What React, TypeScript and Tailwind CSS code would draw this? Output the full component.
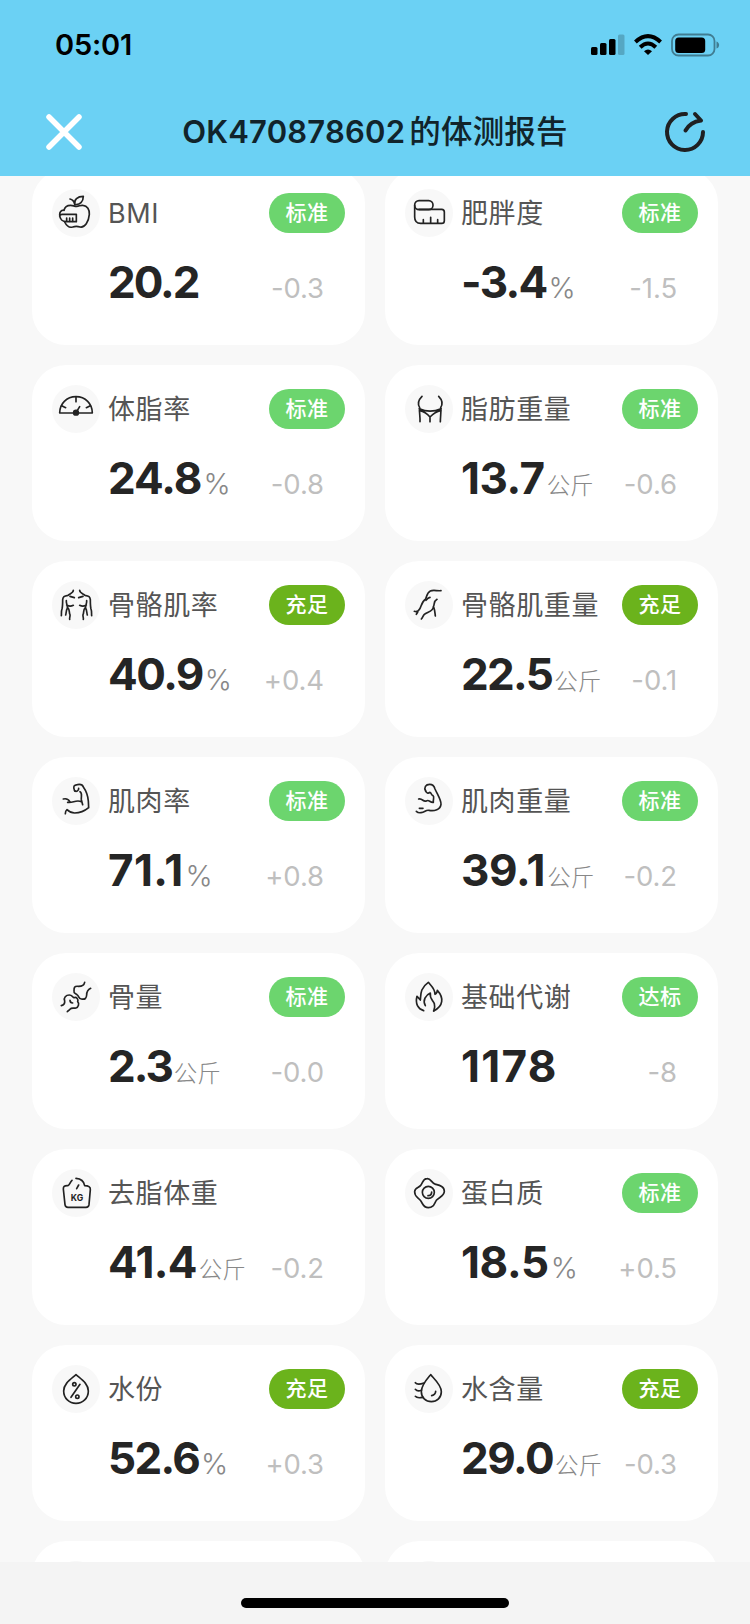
import React from 'react';

const iconPaths: Record<string, React.ReactNode> = {
  apple: (
    <>
      <path d="M54 30C60 31 66 37 68 46C66 32 76 22 94 22C94 38 84 49 68 46" />
      <path d="M36 64C38 54 46 49 56 49C64 49 66 52 74 52C82 52 84 48 93 49C106 50 113 62 112 76C110 98 99 117 84 114C76 111 70 111 62 114C52 117 43 109 38 99" />
      <path d="M35 63C27 64 23 69 23 77C23 90 32 98 44 98H73V76H31C26 76 23 79 23 82" />
      <path d="M44 87v10M53 87v10M62 87v10" />
    </>
  ),
  tape: (
    <>
      <rect x="29" y="35" width="55" height="27" rx="13" />
      <path d="M29 50V84C29 97 35 103 47 103H110Q118 103 118 95V69Q118 61 110 61H42" />
      <path d="M55 92v10M77 85v17M98 92v10" />
    </>
  ),
  gauge: (
    <>
      <path d="M23 84C23 56 44 35 72 35S121 56 121 84Z" />
      <path d="M72 36v14M29 62l12 6M115 62l-12 6M72 83l11-18" />
      <circle cx="72" cy="83" r="7" fill="currentColor" />
    </>
  ),
  waist: (
    <>
      <path d="M51 34C39 46 38 58 44 68C42 80 46 96 45 110" />
      <path d="M101 34C113 46 113 58 107 68C109 80 106 96 106 110" />
      <path d="M43 71Q75 86 108 71M44 77C58 80 67 87 75 96C84 87 93 80 107 77M75 96v14" />
    </>
  ),
  torso: (
    <>
      <path d="M64 28C64 36 54 38 48 43C36 45 33 47 32 56C32 68 32 76 30 84C27 92 29 98 28 104" />
      <path d="M43 59C42 68 47 72 46 82C42 88 43 96 41 102M47 80C55 88 50 94 54 101C55 107 52 110 53 115M44 72C50 76 58 76 64 73M54 46L67 50" />
      <g transform="translate(147) scale(-1 1)">
        <path d="M64 28C64 36 54 38 48 43C36 45 33 47 32 56C32 68 32 76 30 84C27 92 29 98 28 104" />
        <path d="M43 59C42 68 47 72 46 82C42 88 43 96 41 102M47 80C55 88 50 94 54 101C55 107 52 110 53 115M44 72C50 76 58 76 64 73M54 46L67 50" />
      </g>
    </>
  ),
  limb: (
    <>
      <path d="M108 29C96 30 84 26 76 30C66 35 66 44 62 54C50 62 49 76 44 84C40 91 36 94 28 91M34 100L38 94" />
      <path d="M75 49C70 50 66 54 63 58M49 114C53 110 54 105 57 101C68 92 86 92 85 77C90 70 84 62 96 55M86 78C90 88 90 96 91 105" />
    </>
  ),
  biceps: (
    <>
      <path d="M68 42C62 28 66 24 76 23C86 21 92 24 94 30C104 44 108 60 109 72L110 92C98 102 80 108 68 108C58 108 50 103 45 98C41 101 40 106 40 110" />
      <path d="M68 41C72 45 81 42 80 34M84 44C92 48 87 58 88 68L92 83M34 66C42 64 50 67 54 75M47 76C62 79 72 67 88 74" />
    </>
  ),
  muscle: (
    <>
      <path d="M62 42C56 32 62 22 74 22C84 22 88 28 90 36C98 54 109 70 108 82C106 98 88 103 72 100C62 98 60 106 48 107C42 108 38 107 34 103" />
      <path d="M62 42C64 48 70 50 74 46C80 46 77 54 84 56C89 60 84 66 85 76C74 77 72 66 64 72C54 76 54 64 41 66M43 94h11" />
    </>
  ),
  bone: (
    <>
      <path d="M98 28C96 38 90 40 80 40C66 38 66 44 66 54C64 62 72 61 76 66C80 68 80 77 88 78C100 80 103 76 104 66C104 54 108 50 116 46" />
      <path d="M28 98C36 96 39 92 38 84C34 74 42 66 52 66C61 66 59 71 66 74C74 71 80 79 77 86C83 92 79 103 72 105C64 107 59 103 54 109C51 113 48 112 46 116M54 82C54 87 58 90 62 90" />
    </>
  ),
  flame: (
    <>
      <path d="M56 113C39 108 30 92 36 70C40 74 43 77 46 81C48 66 44 46 70 28C76 36 90 46 90 64C94 62 97 58 97 52C108 64 112 74 110 86C108 100 98 108 86 114" />
      <path d="M61 98C52 82 62 66 76 60C73 76 84 82 88 92C91 102 88 108 86 114" />
    </>
  ),
  scale: (
    <>
      <path d="M60 34C54 39 54 46 48 50C36 49 34 54 34 60L39 107Q40 115 48 115H102Q110 115 111 107L115 62C116 54 109 50 98 50C96 38 87 29 72 28M74 59L80 48" />
      <text x="75" y="95" textAnchor="middle" fontSize="26" fontWeight="700" fill="currentColor" stroke="none" fontFamily="Inter, sans-serif">
        KG
      </text>
    </>
  ),
  egg: (
    <>
      <path d="M66 29C79 28 78 42 92 46C104 49 118 52 118 67C118 82 102 84 94 94C87 105 86 116 70 116C54 116 54 104 46 94C38 84 28 82 29 68C29 56 42 57 48 48C54 40 54 29 66 29Z" />
      <circle cx="70" cy="70" r="18" />
      <path d="M69 80C76 80 80 76 80 69" />
    </>
  ),
  percentDrop: (
    <>
      <path d="M72 29C56 43 35 56 35 78C35 100 52 115 72 115S109 100 109 78C109 56 88 43 72 29Z" />
      <circle cx="67" cy="58" r="5" />
      <circle cx="76" cy="95" r="5" />
      <path d="M84 58L57 97" />
    </>
  ),
  drop: (
    <>
      <path d="M77 29C66 42 49 60 49 80C49 98 62 110 79 110S109 98 109 80C109 60 90 44 77 29Z" />
      <path d="M80 92C88 90 92 85 92 79M31 53C36 60 46 58 57 54M31 73C36 79 42 79 49 76M31 94C36 100 44 99 53 97" />
    </>
  ),
};

type Metric = {
  icon?: string;
  name?: string;
  status?: string;
  value?: string;
  tracking?: string;
  unit?: string;
  diff?: string;
};

const metrics: Metric[] = [
  { icon: 'apple', name: 'BMI', status: '标准', value: '20.2', tracking: 'tracking-[-2px]', diff: '-0.3' },
  { icon: 'tape', name: '肥胖度', status: '标准', value: '-3.4', tracking: 'tracking-[-1.7px]', unit: '%', diff: '-1.5' },
  { icon: 'gauge', name: '体脂率', status: '标准', value: '24.8', tracking: 'tracking-[-1px]', unit: '%', diff: '-0.8' },
  { icon: 'waist', name: '脂肪重量', status: '标准', value: '13.7', tracking: 'tracking-[-0.5px]', unit: '公斤', diff: '-0.6' },
  { icon: 'torso', name: '骨骼肌率', status: '充足', value: '40.9', tracking: 'tracking-[-1.5px]', unit: '%', diff: '+0.4' },
  { icon: 'limb', name: '骨骼肌重量', status: '充足', value: '22.5', tracking: 'tracking-[-1.7px]', unit: '公斤', diff: '-0.1' },
  { icon: 'biceps', name: '肌肉率', status: '标准', value: '71.1', tracking: 'tracking-[0.3px]', unit: '%', diff: '+0.8' },
  { icon: 'muscle', name: '肌肉重量', status: '标准', value: '39.1', tracking: 'tracking-[-0.3px]', unit: '公斤', diff: '-0.2' },
  { icon: 'bone', name: '骨量', status: '标准', value: '2.3', tracking: 'tracking-[-2px]', unit: '公斤', diff: '-0.0' },
  { icon: 'flame', name: '基础代谢', status: '达标', value: '1178', tracking: 'tracking-[1.3px]', diff: '-8' },
  { icon: 'scale', name: '去脂体重', value: '41.4', tracking: 'tracking-[-0.7px]', unit: '公斤', diff: '-0.2' },
  { icon: 'egg', name: '蛋白质', status: '标准', value: '18.5', tracking: 'tracking-[-0.4px]', unit: '%', diff: '+0.5' },
  { icon: 'percentDrop', name: '水份', status: '充足', value: '52.6', tracking: 'tracking-[-1.7px]', unit: '%', diff: '+0.3' },
  { icon: 'drop', name: '水含量', status: '充足', value: '29.0', tracking: 'tracking-[-1.5px]', unit: '公斤', diff: '-0.3' },
  {},
  {},
];

const statusColor: Record<string, string> = {
  标准: 'bg-[#6cd56e]',
  达标: 'bg-[#6cd56e]',
  充足: 'bg-[#6bb31c]',
};

const MetricCard: React.FC<{ metric: Metric }> = ({ metric }) => (
  <div className="h-[176px] rounded-[34px] bg-white p-5">
    <div className="flex h-12 items-center">
      <div className="h-12 w-12 shrink-0 rounded-full bg-[#f8f8f8] text-[#222]">
        {metric.icon && (
          <svg viewBox="0 0 144 144" className="h-12 w-12" fill="none" stroke="currentColor" strokeWidth="5" strokeLinecap="round" strokeLinejoin="round">
            {iconPaths[metric.icon]}
          </svg>
        )}
      </div>
      <span className="ml-2 flex-1 whitespace-nowrap pt-[3px] text-[27px] tracking-[0.6px] text-[#555]">{metric.name}</span>
      {metric.status && (
        <span className={`flex h-10 w-[76px] items-center justify-center rounded-full text-[21px] font-medium tracking-[0.5px] text-white ${statusColor[metric.status]}`}>
          {metric.status}
        </span>
      )}
    </div>
    <div className="mt-[15px] flex items-baseline pl-14 pr-[21px] leading-[60px]">
      <span className={`text-[44px] font-bold text-[#252525] ${metric.tracking ?? ''}`}>{metric.value}</span>
      {metric.unit === '%' && <span className="ml-[2px] text-[29px] font-light text-[#888]">%</span>}
      {metric.unit === '公斤' && <span className="ml-[2px] text-[23.5px] font-light text-[#888]">公斤</span>}
      <span className="ml-auto text-[27.5px] font-normal tracking-[-0.1px] text-[#bfbfbf]">{metric.diff}</span>
    </div>
  </div>
);

const StatusBar: React.FC = () => (
  <div className="flex h-[88px] items-center justify-between pl-[55px] pr-[30px] pt-[2px]">
    <span className="text-[29px] font-semibold tracking-[-0.2px] text-black">05:01</span>
    <div className="flex items-center text-black">
      <svg width="34" height="22" viewBox="0 0 34 22" fill="currentColor">
        <rect x="0" y="13" width="6.5" height="8" rx="1.5" />
        <rect x="9" y="9" width="6.5" height="12" rx="1.5" />
        <rect x="18" y="5" width="6.5" height="16" rx="1.5" />
        <rect x="27" y="0.5" width="6.5" height="20.5" rx="1.5" opacity="0.2" />
      </svg>
      <svg width="28" height="22" viewBox="0 0 28 22" fill="none" stroke="currentColor" strokeWidth="4" className="ml-[9px]">
        <path d="M1.4 8Q14 -3.6 26.6 8" />
        <path d="M6.2 13.2Q14 5.8 21.8 13.2" />
        <path d="M14 21L10 17.3Q14 13.6 18 17.3Z" fill="currentColor" stroke="none" />
      </svg>
      <svg width="49" height="24" viewBox="0 0 49 24" className="ml-[9px]">
        <rect x="1" y="1.5" width="42.5" height="21" rx="6.5" fill="none" stroke="#000" strokeOpacity="0.4" strokeWidth="1.8" />
        <rect x="4.2" y="4.5" width="30" height="15.5" rx="3.5" fill="#000" />
        <path d="M45.5 8.5C49 9.5 49 14.5 45.5 15.5Z" fill="#000" fillOpacity="0.4" />
      </svg>
    </div>
  </div>
);

export default function App() {
  return (
    <div className="flex h-[1624px] w-[750px] flex-col bg-[#f8f8f8] font-['Inter','Noto_Sans_CJK_SC',sans-serif]">
      <header className="h-[176px] shrink-0 bg-[#6bd1f4]">
        <StatusBar />
        <div className="flex h-[88px] items-center justify-between pl-[46px] pr-[44px]">
          <svg width="36" height="36" viewBox="0 0 36 36" stroke="#fff" strokeWidth="5.5" strokeLinecap="round">
            <path d="M3 3l30 30M33 3L3 33" />
          </svg>
          <h1 className="whitespace-nowrap pl-[4px] text-[31.5px] font-medium text-[#11242b]">
            <span className="text-[31px] font-semibold tracking-[0.2px]">OK470878602</span>
            <span className="ml-[4px] tracking-[0.2px]">的体测报告</span>
          </h1>
          <svg width="42" height="42" viewBox="0 0 42 42" fill="none" stroke="#1f2022" strokeWidth="4" strokeLinecap="round" strokeLinejoin="round">
            <path d="M22 3A18 18 0 1 0 39 21" />
            <path d="M21.500 19.500C25 13 30 10.500 37 9.500M31 3l6 6.500" />
          </svg>
        </div>
      </header>

      <main className="flex-1 overflow-hidden">
        <div className="-mt-[7px] grid grid-cols-2 gap-5 px-8">
          {metrics.map((metric, index) => (
            <MetricCard key={index} metric={metric} />
          ))}
        </div>
      </main>

      <footer className="flex h-[62px] shrink-0 items-end justify-center bg-[#f4f4f4] pb-4">
        <div className="h-[10px] w-[268px] rounded-full bg-black" />
      </footer>
    </div>
  );
}
